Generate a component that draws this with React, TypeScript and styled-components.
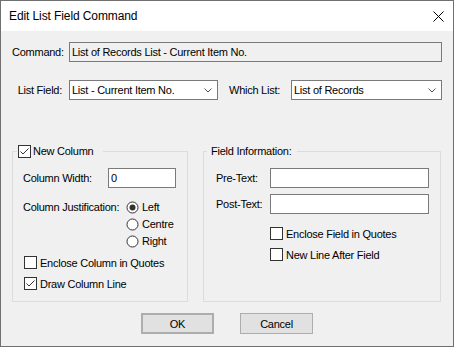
import React from "react";
import styled, { createGlobalStyle } from "styled-components";

const GlobalStyle = createGlobalStyle`
  html, body { margin: 0; padding: 0; background: #ffffff; }
  body { font-family: "Liberation Sans", Arial, sans-serif; font-size: 11px; }
`;

const Window = styled.div`
  width: 454px;
  height: 347px;
  box-sizing: border-box;
  border: 1px solid #707070;
  display: flex;
  flex-direction: column;
  background: #f0f0f0;
  color: #000;
  font-family: "Liberation Sans", Arial, sans-serif;
  font-size: 11px;
  letter-spacing: -0.25px;
`;

const TitleBar = styled.div`
  height: 30px;
  flex: none;
  background: #ffffff;
  display: flex;
  align-items: center;
  justify-content: space-between;
  padding: 0 9px 0 8px;
  font-size: 12px;
  letter-spacing: -0.1px;
`;

const Content = styled.div`
  flex: 1;
  padding: 11px 11px 0;
  display: flex;
  flex-direction: column;
`;

const FieldRow = styled.div<{ $top?: number }>`
  display: flex;
  align-items: center;
  height: 20px;
  margin-top: ${(p) => p.$top ?? 0}px;
`;

const RowLabel = styled.span<{ $width: number; $align?: string; $gap?: number }>`
  flex: none;
  width: ${(p) => p.$width}px;
  text-align: ${(p) => p.$align ?? "left"};
  margin-right: ${(p) => p.$gap ?? 0}px;
  white-space: nowrap;
`;

const TextBox = styled.input<{ $width?: number; $readonly?: boolean }>`
  box-sizing: border-box;
  height: 20px;
  margin: 0;
  ${(p) => (p.$width ? `width: ${p.$width}px; flex: none;` : "flex: 1; min-width: 0;")}
  border: 1px solid #7a7a7a;
  background: ${(p) => (p.$readonly ? "#f0f0f0" : "#ffffff")};
  font: inherit;
  letter-spacing: inherit;
  color: #000;
  padding: 0 2px;
  outline: none;
`;

const Combo = styled.div<{ $width?: number }>`
  box-sizing: border-box;
  height: 20px;
  ${(p) => (p.$width ? `width: ${p.$width}px; flex: none;` : "flex: 1; min-width: 0;")}
  border: 1px solid #7a7a7a;
  background: #ffffff;
  display: flex;
  align-items: center;
  justify-content: space-between;
  padding: 0 5px 0 2px;
  white-space: nowrap;
`;

const GroupsRow = styled.div`
  display: flex;
  gap: 15px;
  margin-top: 45px;
`;

const Group = styled.fieldset<{ $width: number }>`
  box-sizing: border-box;
  width: ${(p) => p.$width}px;
  height: 157px;
  margin: 0;
  padding: 0;
  min-width: 0;
  border: 1px solid #dcdcdc;
`;

const Legend = styled.legend<{ $ml: number; $pl: number; $pr: number }>`
  margin-left: ${(p) => p.$ml}px;
  padding: 0 ${(p) => p.$pr}px 0 ${(p) => p.$pl}px;
  height: 13px;
  line-height: 13px;
`;

const LegendInner = styled.span`
  display: inline-flex;
  align-items: center;
  gap: 2px;
  height: 13px;
  vertical-align: top;
`;

const GroupBody = styled.div<{ $pl: number }>`
  padding: 10px 0 0 ${(p) => p.$pl}px;
  display: flex;
  flex-direction: column;
`;

const JustRow = styled.div`
  display: flex;
  align-items: flex-start;
  margin-top: 11px;
  line-height: 17px;
`;

const RadioList = styled.div`
  display: flex;
  flex-direction: column;
`;

const RadioItem = styled.label`
  display: flex;
  align-items: center;
  gap: 3px;
  height: 17px;
`;

const CheckRow = styled.label<{ $top: number; $indent: number }>`
  display: flex;
  align-items: center;
  gap: 3px;
  height: 17px;
  margin-top: ${(p) => p.$top}px;
  padding-left: ${(p) => p.$indent}px;
  white-space: nowrap;
`;

const Box = styled.span`
  box-sizing: border-box;
  flex: none;
  width: 13px;
  height: 13px;
  border: 1px solid #333333;
  background: #ffffff;
  display: inline-flex;
  align-items: center;
  justify-content: center;
`;

const ButtonRow = styled.div`
  display: flex;
  justify-content: center;
  gap: 26px;
  margin-top: 11px;
`;

const Button = styled.button<{ $default?: boolean }>`
  box-sizing: border-box;
  width: 73px;
  height: 21px;
  margin: 0;
  padding: 0;
  background: #e1e1e1;
  border: ${(p) => (p.$default ? "2px" : "1px")} solid #adadad;
  font: inherit;
  letter-spacing: inherit;
  color: #000;
`;

const Check = ({ checked }: { checked?: boolean }) => (
  <Box>
    {checked && (
      <svg width="11" height="11" viewBox="0 0 11 11">
        <polyline points="1.5,5.5 4,8 9.5,2.5" fill="none" stroke="#333" strokeWidth="1" />
      </svg>
    )}
  </Box>
);

const Radio = ({ checked }: { checked?: boolean }) => (
  <svg width="13" height="13" viewBox="0 0 13 13" style={{ flex: "none" }}>
    <circle cx="6.5" cy="6.5" r="5.5" fill="#fff" stroke="#333" strokeWidth="1" />
    {checked && <circle cx="6.5" cy="6.5" r="3" fill="#333" />}
  </svg>
);

const Chevron = () => (
  <svg width="8" height="5" viewBox="0 0 8 5">
    <polyline points="0.5,0.5 4,4 7.5,0.5" fill="none" stroke="#555" strokeWidth="1" />
  </svg>
);

const CloseIcon = () => (
  <svg width="11" height="11" viewBox="0 0 11 11">
    <line x1="0.5" y1="0.5" x2="10.5" y2="10.5" stroke="#000" strokeWidth="1" />
    <line x1="10.5" y1="0.5" x2="0.5" y2="10.5" stroke="#000" strokeWidth="1" />
  </svg>
);

export default function App() {
  return (
    <>
      <GlobalStyle />
      <Window>
        <TitleBar>
          <span>Edit List Field Command</span>
          <CloseIcon />
        </TitleBar>
        <Content>
          <FieldRow>
            <RowLabel $width={50} $align="right" $gap={7}>Command:</RowLabel>
            <TextBox $readonly readOnly value="List of Records List - Current Item No." />
          </FieldRow>
          <FieldRow $top={18}>
            <RowLabel $width={50} $align="right" $gap={7}>List Field:</RowLabel>
            <Combo $width={149}>
              <span>List - Current Item No.</span>
              <Chevron />
            </Combo>
            <RowLabel $width={62} style={{ marginLeft: 11 }}>Which List:</RowLabel>
            <Combo>
              <span>List of Records</span>
              <Chevron />
            </Combo>
          </FieldRow>
          <GroupsRow>
            <Group $width={176}>
              <Legend $ml={4} $pl={1} $pr={10}>
                <LegendInner>
                  <Check checked />
                  <span>New Column</span>
                </LegendInner>
              </Legend>
              <GroupBody $pl={10}>
                <FieldRow>
                  <RowLabel $width={85}>Column Width:</RowLabel>
                  <TextBox $width={68} readOnly value="0" />
                </FieldRow>
                <JustRow>
                  <RowLabel $width={103}>Column Justification:</RowLabel>
                  <RadioList>
                    <RadioItem><Radio checked /><span>Left</span></RadioItem>
                    <RadioItem><Radio /><span>Centre</span></RadioItem>
                    <RadioItem><Radio /><span>Right</span></RadioItem>
                  </RadioList>
                </JustRow>
                <CheckRow $top={4} $indent={1}>
                  <Check />
                  <span>Enclose Column in Quotes</span>
                </CheckRow>
                <CheckRow $top={4} $indent={1}>
                  <Check checked />
                  <span>Draw Column Line</span>
                </CheckRow>
              </GroupBody>
            </Group>
            <Group $width={238}>
              <Legend $ml={3} $pl={4} $pr={6}>
                <LegendInner>Field Information:</LegendInner>
              </Legend>
              <GroupBody $pl={12}>
                <FieldRow>
                  <RowLabel $width={54}>Pre-Text:</RowLabel>
                  <TextBox $width={159} readOnly value="" />
                </FieldRow>
                <FieldRow $top={6}>
                  <RowLabel $width={54}>Post-Text:</RowLabel>
                  <TextBox $width={159} readOnly value="" />
                </FieldRow>
                <CheckRow $top={11} $indent={54}>
                  <Check />
                  <span>Enclose Field in Quotes</span>
                </CheckRow>
                <CheckRow $top={4} $indent={54}>
                  <Check />
                  <span>New Line After Field</span>
                </CheckRow>
              </GroupBody>
            </Group>
          </GroupsRow>
          <ButtonRow>
            <Button $default>OK</Button>
            <Button>Cancel</Button>
          </ButtonRow>
        </Content>
      </Window>
    </>
  );
}
